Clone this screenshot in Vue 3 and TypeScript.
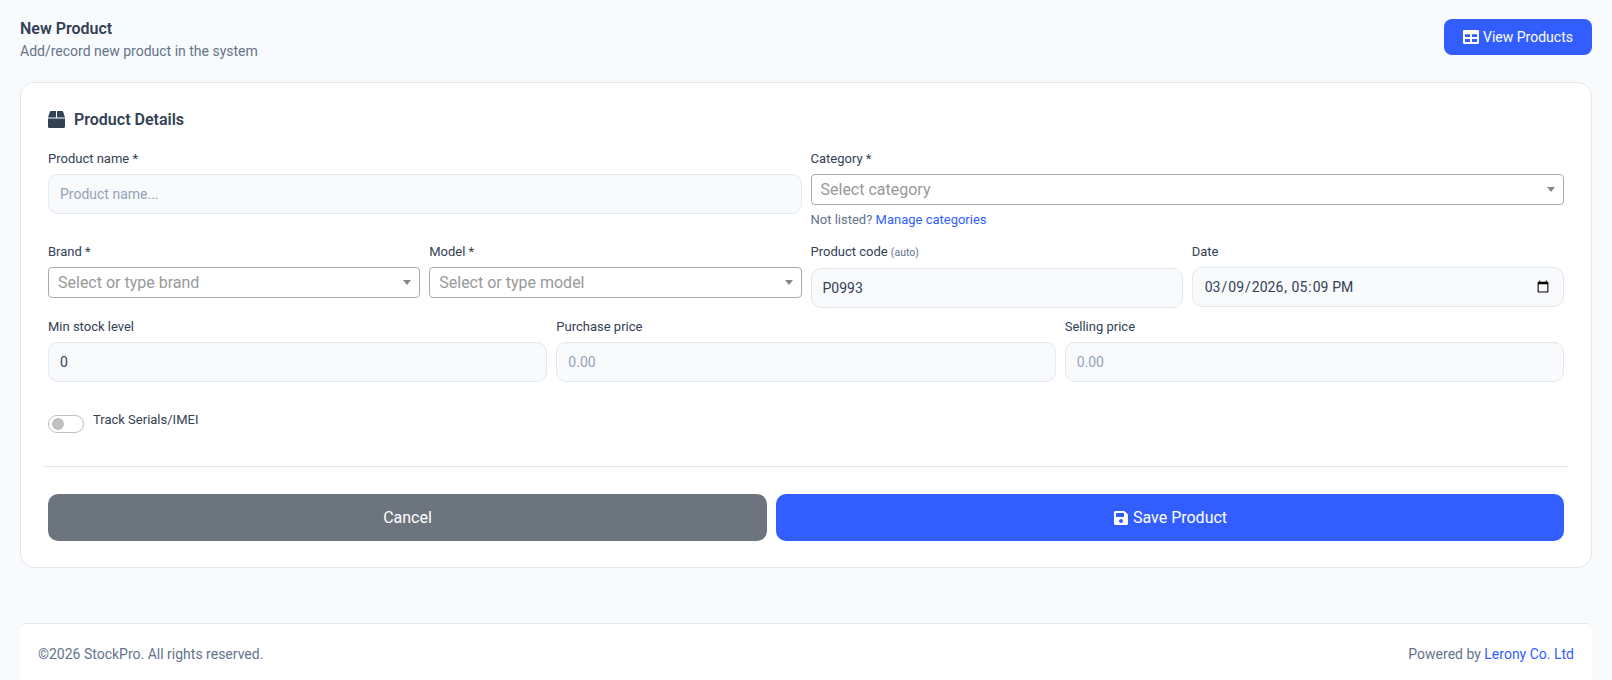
<script setup lang="ts">
import { ref } from 'vue'

// form state, all local
const productCode = ref('P0993')
const productDate = ref('2026-03-09T17:09')
const minStock = ref('0')
const trackSerials = ref(false)
</script>

<template>
  <div class="page">
    <header class="page__head">
      <div>
        <h1 class="page__title">New Product</h1>
        <p class="page__sub">Add/record new product in the system</p>
      </div>
      <button class="btn btn--top" type="button">
        <svg class="ico" viewBox="0 0 16 14" aria-hidden="true">
          <path fill-rule="evenodd" d="M1.2 0h13.6c.7 0 1.2.5 1.2 1.2v11.6c0 .7-.5 1.2-1.2 1.2H1.2C.5 14 0 13.5 0 12.8V1.2C0 .5.5 0 1.2 0zM2 4.2v2.9h5V4.2H2zm7 0v2.9h5V4.2H9zM2 9v3h5V9H2zm7 0v3h5V9H9z" />
        </svg>
        View Products
      </button>
    </header>

    <section class="card">
      <h2 class="card__title">
        <svg class="card__ico" viewBox="0 0 512 512" aria-hidden="true">
          <path d="M509.5 184.6L458.9 32.8C452.4 13.2 434.1 0 413.4 0H272v192h238.7c-.4-2.5-.4-5-1.2-7.4zM240 0H98.6c-20.7 0-39 13.2-45.5 32.8L2.5 184.6c-.8 2.4-.8 4.9-1.2 7.4H240V0zM0 224v240c0 26.5 21.5 48 48 48h416c26.5 0 48-21.5 48-48V224H0z" />
        </svg>
        Product Details
      </h2>

      <div class="grid grid--two">
        <div class="field">
          <label class="field__label">Product name *</label>
          <input class="input" placeholder="Product name..." />
        </div>
        <div class="field">
          <label class="field__label">Category *</label>
          <div class="combo">
            <span class="combo__text">Select category</span>
            <span class="combo__arrow"></span>
          </div>
          <div class="note">Not listed? <a class="link" href="#">Manage categories</a></div>
        </div>
      </div>

      <div class="grid grid--four">
        <div class="field">
          <label class="field__label">Brand *</label>
          <div class="combo">
            <span class="combo__text">Select or type brand</span>
            <span class="combo__arrow"></span>
          </div>
        </div>
        <div class="field">
          <label class="field__label">Model *</label>
          <div class="combo">
            <span class="combo__text">Select or type model</span>
            <span class="combo__arrow"></span>
          </div>
        </div>
        <div class="field">
          <label class="field__label">Product code <small class="field__hint">(auto)</small></label>
          <input v-model="productCode" class="input" />
        </div>
        <div class="field">
          <label class="field__label">Date</label>
          <input v-model="productDate" class="input" type="datetime-local" />
        </div>
      </div>

      <div class="grid grid--three">
        <div class="field">
          <label class="field__label">Min stock level</label>
          <input v-model="minStock" class="input" />
        </div>
        <div class="field">
          <label class="field__label">Purchase price</label>
          <input class="input" placeholder="0.00" />
        </div>
        <div class="field">
          <label class="field__label">Selling price</label>
          <input class="input" placeholder="0.00" />
        </div>
      </div>

      <div class="track">
        <button
          class="switch"
          type="button"
          :class="{ on: trackSerials }"
          @click="trackSerials = !trackSerials"
        >
          <span class="switch__knob"></span>
        </button>
        <span class="track__label">Track Serials/IMEI</span>
      </div>

      <hr class="divider" />

      <div class="actions">
        <button class="btn btn--big btn--cancel" type="button">Cancel</button>
        <button class="btn btn--big" type="button">
          <svg class="ico ico--save" viewBox="0 0 448 512" aria-hidden="true">
            <path d="M433.941 129.941l-83.882-83.882A48 48 0 0 0 316.118 32H48C21.49 32 0 53.49 0 80v352c0 26.51 21.49 48 48 48h352c26.51 0 48-21.49 48-48V163.882a48 48 0 0 0-14.059-33.941zM224 416c-35.346 0-64-28.654-64-64 0-35.346 28.654-64 64-64s64 28.654 64 64c0 35.346-28.654 64-64 64zm96-304.52V212c0 6.627-5.373 12-12 12H76c-6.627 0-12-5.373-12-12V108c0-6.627 5.373-12 12-12h228.52c3.183 0 6.235 1.264 8.485 3.515l3.48 3.48A11.996 11.996 0 0 1 320 111.48z" />
          </svg>
          Save Product
        </button>
      </div>
    </section>

    <footer class="footer">
      <span>©2026 StockPro. All rights reserved.</span>
      <span>Powered by <a class="link" href="#">Lerony Co. Ltd</a></span>
    </footer>
  </div>
</template>

<style>
html,
body {
  margin: 0;
  background: #f8fafc;
}
</style>

<style scoped>
.page {
  box-sizing: border-box;
  height: 680px;
  overflow: hidden;
  padding: 19px 20px 0;

  font-family: Roboto, "Liberation Sans", sans-serif;
  color: #334155;
  background: #f8fafc;
}

.page__head {
  display: flex;
  align-items: flex-start;
  justify-content: space-between;
  height: 63px;
}

.page__title {
  margin: 0;
  font-size: 16px;
  font-weight: 600;
  line-height: 20px;
  color: #334155;
}

.page__sub {
  margin: 2px 0 0;
  font-size: 14px;
  line-height: 20px;
  color: #64748b;
}

/* buttons */
.btn {
  cursor: pointer;

  display: inline-flex;
  gap: 4px;
  align-items: center;
  justify-content: center;

  font-family: inherit;
  color: #fff;

  background: #335eff;
  border: none;
  border-radius: 8px;
}

.btn--top {
  width: 148px;
  height: 36px;
  font-size: 14px;
}

.btn--big {
  flex: 1 1 0;
  height: 47px;
  font-size: 16px;
  border-radius: 10px;
}

.btn--cancel {
  flex: 0 0 719px;
  background: #6c757d;
}

.ico {
  width: 16px;
  height: 14px;
  fill: #fff;
}

.ico--save {
  height: 16px;
}

/* card */
.card {
  box-sizing: border-box;
  height: 486px;
  padding: 26px 27px 0;

  background: #fff;
  border: 1px solid #e2e8f0;
  border-radius: 14px;
}

.card__title {
  display: flex;
  gap: 9px;
  align-items: center;

  height: 20px;
  margin: 0 0 20px;

  font-size: 16px;
  font-weight: 600;
  color: #334155;
}

.card__ico {
  width: 17px;
  height: 17px;
  fill: #334155;
}

.grid {
  display: grid;
  gap: 9px;
  margin-bottom: 9px;
}

.grid--two {
  grid-template-columns: repeat(2, minmax(0, 1fr));
}

.grid--four {
  grid-template-columns: repeat(4, minmax(0, 1fr));
}

.grid--three {
  grid-template-columns: repeat(3, minmax(0, 1fr));
}

.field__label {
  display: block;
  margin-bottom: 5px;
  font-size: 13px;
  line-height: 20px;
  color: #334155;
}

.field__hint {
  font-size: 10.5px;
  color: #64748b;
}

.input {
  box-sizing: border-box;
  width: 100%;
  height: 40px;
  padding: 0 11px;

  font-family: inherit;
  font-size: 14px;
  color: #334155;

  background: #f8fafc;
  border: 1px solid #e2e8f0;
  border-radius: 10px;
  outline: none;
}

.input::placeholder {
  color: #94a3b8;
}

/* select2 style box */
.combo {
  position: relative;

  display: flex;
  align-items: center;

  box-sizing: border-box;
  height: 31px;
  padding: 0 9px;

  background: #fff;
  border: 1px solid #aaa;
  border-radius: 4px;
}

.combo__text {
  font-size: 16px;
  color: #999;
}

.combo__arrow {
  position: absolute;
  top: 12px;
  right: 8px;

  border-top: 5px solid #888;
  border-right: 4px solid transparent;
  border-left: 4px solid transparent;
}

.note {
  margin: 5px 0 3px;
  font-size: 13px;
  line-height: 20px;
  color: #64748b;
}

.link {
  color: #335eff;
  text-decoration: none;
}

/* toggle row */
.track {
  display: flex;
  gap: 9px;
  align-items: flex-start;
  height: 18px;
  margin-top: 33px;
}

.track__label {
  margin-top: -3px;
  font-size: 13px;
  line-height: 16px;
}

.switch {
  display: block;
  box-sizing: border-box;
  width: 36px;
  height: 18px;
  padding: 2px 3px;

  background: #fff;
  border: 1px solid #bfbfbf;
  border-radius: 9px;
}

.switch__knob {
  display: block;
  width: 12px;
  height: 12px;
  background: #bfbfbf;
  border-radius: 50%;
}

.divider {
  height: 1px;
  margin: 33px -5px 27px;
  background: #e2e8f0;
  border: none;
}

.actions {
  display: flex;
  gap: 9px;
}

/* footer */
.footer {
  display: flex;
  align-items: center;
  justify-content: space-between;

  box-sizing: border-box;
  height: 60px;
  margin-top: 55px;
  padding: 0 18px 0;

  font-size: 14px;
  color: #64748b;

  background: #fff;
  border-top: 1px solid #e2e8f0;
  border-radius: 6px 6px 0 0;
}
</style>
